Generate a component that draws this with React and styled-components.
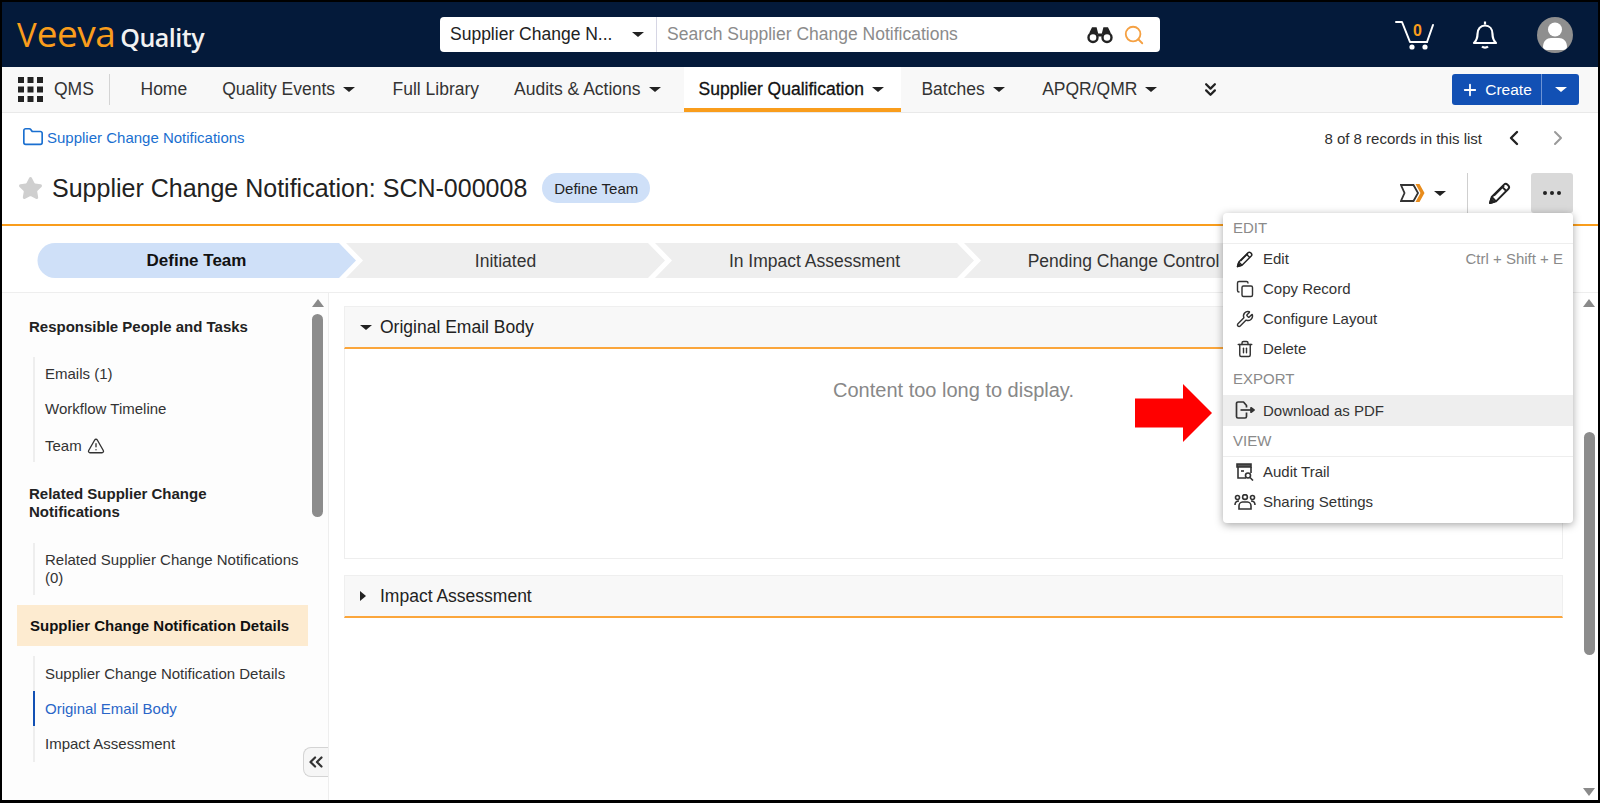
import React from "react";
import styled, { createGlobalStyle } from "styled-components";
import {
  ChevronLeft,
  ChevronRight,
  ChevronsDown,
  ChevronsLeft,
  Copy,
  Folder,
  Plus,
  Search,
  Star,
  Trash2,
  TriangleAlert,
  Wrench,
} from "lucide-react";

const GlobalStyle = createGlobalStyle`
  html, body {
    margin: 0;
    padding: 0;
    background: #000;
    overflow: hidden;
  }
  * {
    box-sizing: border-box;
  }
`;

const Frame = styled.div`
  position: relative;
  width: 1600px;
  height: 803px;
  border: solid #000;
  border-width: 2px 2px 3px 2px;
  background: #fff;
  display: flex;
  flex-direction: column;
  overflow: hidden;
  font-family: "Liberation Sans", Arial, sans-serif;
  color: #2a2a2a;
`;

const Header = styled.header`
  height: 65px;
  flex: none;
  background: #041a3a;
  display: grid;
  grid-template-columns: 438px 720px 1fr;
  align-items: center;
`;

const Logo = styled.div`
  display: flex;
  align-items: baseline;
  padding: 0 0 4px 15px;
`;

const LogoInitial = styled.span`
  font-family: "Open Sans", sans-serif;
  font-weight: 500;
  font-size: 33px;
  line-height: 1;
  color: #f99d1c;
`;

const LogoMark = styled.span`
  font-family: "Open Sans", sans-serif;
  font-weight: 500;
  font-size: 37px;
  letter-spacing: -0.5px;
  line-height: 1;
  color: #f99d1c;
`;

const LogoWord = styled.span`
  margin-left: 5px;
  font-family: "Open Sans", sans-serif;
  font-weight: 600;
  font-size: 25px;
  letter-spacing: -0.5px;
  line-height: 1;
  color: #f2f2f2;
`;

const SearchBar = styled.div`
  height: 35px;
  background: #fff;
  border-radius: 4px;
  display: flex;
  align-items: center;
`;

const SearchScope = styled.div`
  width: 217px;
  height: 100%;
  flex: none;
  display: flex;
  align-items: center;
  justify-content: space-between;
  padding: 0 12px 0 10px;
  border-right: 1px solid #d6d6e4;
  font-size: 17.5px;
  color: #222;
`;

const SearchHint = styled.div`
  flex: 1;
  padding-left: 10px;
  font-size: 17.5px;
  color: #8b8b8b;
`;

const SearchIcons = styled.div`
  display: flex;
  align-items: center;
  gap: 10px;
  padding-right: 15px;
`;

const UserTools = styled.div`
  display: flex;
  justify-content: flex-end;
  align-items: center;
  padding-right: 25px;
`;

const CartWrap = styled.div`
  position: relative;
  width: 40px;
  height: 30px;
  margin-right: 37px;
`;

const CartCount = styled.span`
  position: absolute;
  left: 18px;
  top: 2px;
  font-size: 16px;
  font-weight: 700;
  color: #f99d1c;
`;

const BellWrap = styled.div`
  display: flex;
  margin-right: 39px;
`;

const Avatar = styled.div`
  width: 36px;
  height: 36px;
  border-radius: 50%;
  background: #8f8f8f;
  overflow: hidden;
`;

const Nav = styled.nav`
  height: 46px;
  flex: none;
  background: #f8f8f8;
  border-bottom: 1px solid #e9e9e9;
  display: flex;
  align-items: stretch;
  padding-right: 19px;
  font-size: 17.5px;
  color: #333;
`;

const AppSwitch = styled.div`
  width: 108px;
  flex: none;
  margin: 7px 13px 7px 0;
  padding-left: 16px;
  display: flex;
  align-items: center;
  gap: 11px;
  border-right: 1px solid #d4d4d4;
`;

const NavItem = styled.div`
  display: flex;
  align-items: center;
  white-space: nowrap;
  padding: ${(p) => (p.$active ? "0 17px 0 15px" : p.$menu ? "0 20px 0 17.5px" : "0 17.5px")};
  margin: ${(p) => (p.$active ? "0 3px 0 3px" : "0")};
  background: ${(p) => (p.$active ? "#fff" : "transparent")};
  color: ${(p) => (p.$active ? "#111" : "#333")};
  -webkit-text-stroke: ${(p) => (p.$active ? "0.3px #111" : "0")};
  box-shadow: ${(p) => (p.$active ? "inset 0 -4px 0 #f99d1c" : "none")};
`;

const Caret = styled.span`
  display: inline-block;
  flex: none;
  width: 0;
  height: 0;
  margin-left: ${(p) => p.$gap ?? 8}px;
  border-left: 6px solid transparent;
  border-right: 6px solid transparent;
  border-top: 5.5px solid ${(p) => p.$color ?? "#222"};
`;

const NavMore = styled.div`
  display: flex;
  align-items: center;
  margin-left: 23px;
  color: #222;
`;

const CreateGroup = styled.div`
  margin: 7px 0 7px auto;
  height: 31px;
  display: flex;
  border-radius: 3px;
  overflow: hidden;
  background: #1250b4;
  color: #fff;
  font-size: 15.5px;
`;

const CreateMain = styled.div`
  width: 90px;
  display: flex;
  align-items: center;
  justify-content: center;
  gap: 6px;
  border-right: 1px solid #6d93d4;
`;

const CreateCaret = styled.div`
  width: 37px;
  display: flex;
  align-items: center;
  justify-content: center;
`;

const RecordBar = styled.div`
  flex: none;
  height: 48px;
  padding: 0 28px 0 20px;
  display: flex;
  align-items: center;
  justify-content: space-between;
`;

const Breadcrumb = styled.div`
  display: flex;
  align-items: center;
  gap: 3px;
  font-size: 15px;
  color: #1a6fd0;
`;

const Pager = styled.div`
  display: flex;
  align-items: center;
  font-size: 15px;
  color: #2f2f2f;
  gap: 20px;
  padding-top: 2px;
`;

const PagerArrows = styled.div`
  display: flex;
  gap: 20px;
`;

const TitleBar = styled.div`
  flex: none;
  height: 65px;
  padding: 0 25px 9px 16px;
  border-bottom: 2px solid #f99d1c;
  display: flex;
  align-items: center;
  justify-content: space-between;
`;

const TitleGroup = styled.div`
  display: flex;
  align-items: center;
`;

const Title = styled.h1`
  margin: 0 15px 0 9px;
  font-size: 25px;
  font-weight: 400;
  color: #222;
`;

const Badge = styled.span`
  height: 30px;
  padding: 0 12px;
  display: flex;
  align-items: center;
  border-radius: 15px;
  background: #cfe0f8;
  font-size: 15px;
  color: #222;
`;

const Actions = styled.div`
  display: flex;
  align-items: center;
  height: 40px;
  align-self: flex-end;
  margin-bottom: 2px;
`;

const WorkflowButton = styled.div`
  display: flex;
  align-items: center;
  padding-right: 21px;
  border-right: 1px solid #cfcfcf;
  height: 100%;
`;

const EditButton = styled.div`
  width: 63px;
  display: flex;
  justify-content: center;
`;

const MoreButton = styled.div`
  width: 42px;
  height: 40px;
  border-radius: 3px;
  background: #d9d9d9;
  display: flex;
  align-items: center;
  justify-content: center;
  gap: 3px;
`;

const Dot = styled.span`
  width: 4px;
  height: 4px;
  border-radius: 50%;
  background: #222;
`;

const StageStrip = styled.div`
  flex: none;
  height: 67px;
  padding: 17px 0 0 35px;
  border-bottom: 1px solid #eee;
  display: flex;
  overflow: hidden;
`;

const Stage = styled.div`
  width: 319px;
  height: 35px;
  flex: none;
  margin-left: ${(p) => (p.$first ? 0 : -10)}px;
  padding-top: 1px;
  display: flex;
  align-items: center;
  justify-content: center;
  font-size: ${(p) => (p.$current ? 17 : 17.5)}px;
  font-weight: ${(p) => (p.$current ? 700 : 400)};
  background: ${(p) => (p.$current ? "#cfe0f8" : "#eeeeee")};
  color: ${(p) => (p.$current ? "#111" : "#333")};
  clip-path: ${(p) =>
    p.$first
      ? "path('M18 0 H302 L319 17.5 L302 35 H18 A17.5 17.5 0 0 1 18 0 Z')"
      : "polygon(0 0, 302px 0, 100% 50%, 302px 100%, 0 100%, 17px 50%)"};
`;

const Body = styled.div`
  flex: 1;
  min-height: 0;
  display: flex;
`;

const Sidebar = styled.aside`
  position: relative;
  width: 327px;
  flex: none;
  display: flex;
  border-right: 1px solid #eee;
  background: #fdfdfd;
`;

const SideNav = styled.div`
  width: 306px;
  padding: 25px 0 0 15px;
  display: flex;
  flex-direction: column;
`;

const GroupTitle = styled.div`
  padding: 0 0 0 12px;
  margin-bottom: ${(p) => p.$mb ?? 21}px;
  font-size: 15px;
  line-height: 17.5px;
  font-weight: 700;
  color: #222;
`;

const ActiveGroup = styled.div`
  height: 41px;
  margin: 9.5px 0 10px;
  padding-left: 13px;
  display: flex;
  align-items: center;
  background: #fdebd0;
  font-size: 15px;
  font-weight: 700;
  color: #111;
`;

const SubList = styled.div`
  margin: 0 0 ${(p) => p.$mb ?? 23}px 16px;
  border-left: 2.5px solid #eeeeee;
  display: flex;
  flex-direction: column;
`;

const SubItem = styled.div`
  min-height: 35.3px;
  margin-left: -2.5px;
  padding: ${(p) => (p.$wrap ? "8px 8px 8px 10.5px" : "0 0 0 10.5px")};
  padding-top: ${(p) => (p.$lower ? "3px" : undefined)};
  display: flex;
  align-items: center;
  gap: 5px;
  font-size: 15px;
  line-height: 18px;
  border-left: 2.5px solid ${(p) => (p.$active ? "#1250b4" : "transparent")};
  color: ${(p) => (p.$active ? "#2a66c8" : "#333")};
`;

const ScrollTrack = styled.div`
  width: ${(p) => p.$w ?? 11}px;
  flex: none;
  margin: ${(p) => p.$margin ?? "0"};
  padding: 6px 0 0 ${(p) => p.$pl ?? 0}px;
  display: flex;
  flex-direction: column;
  align-items: center;
`;

const ScrollUp = styled.span`
  width: 0;
  height: 0;
  flex: none;
  border-left: 6px solid transparent;
  border-right: 6px solid transparent;
  border-bottom: 8px solid #8a8a8a;
`;

const ScrollDown = styled.span`
  width: 0;
  height: 0;
  flex: none;
  margin-top: auto;
  margin-bottom: 4px;
  border-left: 6px solid transparent;
  border-right: 6px solid transparent;
  border-top: 8px solid #8a8a8a;
`;

const ScrollThumb = styled.div`
  width: 11px;
  flex: none;
  height: ${(p) => p.$h}px;
  margin-top: ${(p) => p.$top}px;
  border-radius: 6px;
  background: #8c8c8c;
`;

const Collapse = styled.div`
  position: absolute;
  right: 0;
  top: 454px;
  width: 25px;
  height: 30px;
  border: 1px solid #d4d4d4;
  border-right: none;
  border-radius: 8px 0 0 8px;
  background: #f6f6f6;
  display: flex;
  align-items: center;
  justify-content: center;
`;

const Main = styled.main`
  flex: 1;
  min-width: 0;
  display: flex;
`;

const Sections = styled.div`
  flex: 1;
  min-width: 0;
  padding: 13px 0 0 15px;
  display: flex;
  flex-direction: column;
`;

const SectionHead = styled.div`
  height: 43px;
  padding-left: 15px;
  display: flex;
  align-items: center;
  background: #f8f8f8;
  border: 1px solid #efefef;
  border-bottom: 2px solid #fba63c;
  font-size: 17.5px;
  color: #222;
`;

const SectionBody = styled.div`
  height: 210px;
  margin-bottom: 16px;
  padding-top: 30px;
  border: 1px solid #eee;
  border-top: none;
  text-align: center;
  font-size: 20px;
  color: #888;
`;

const ClosedCaret = styled.span`
  width: 0;
  height: 0;
  flex: none;
  margin-right: 14px;
  border-top: 5.5px solid transparent;
  border-bottom: 5.5px solid transparent;
  border-left: 6px solid #222;
`;

const OpenCaret = styled(Caret)`
  margin-left: 0;
  margin-right: 8px;
`;

const Menu = styled.div`
  position: absolute;
  left: 1221px;
  top: 211px;
  width: 350px;
  height: 310px;
  background: #fff;
  border-radius: 4px;
  box-shadow: 0 2px 8px rgba(0, 0, 0, 0.35);
  z-index: 5;
  font-size: 15px;
  color: #333;
`;

const MenuLabel = styled.div`
  height: 31px;
  padding: 0 0 2px 10px;
  display: flex;
  align-items: center;
  border-bottom: ${(p) => (p.$rule ? "1px solid #eee" : "none")};
  color: #8a8a8a;
  font-size: 15px;
`;

const MenuItem = styled.div`
  height: ${(p) => (p.$hover ? 31 : 30)}px;
  padding: 0 10px 1px 13px;
  display: flex;
  align-items: center;
  gap: 9px;
  background: ${(p) => (p.$hover ? "#eeeeee" : "transparent")};
`;

const MenuIcon = styled.span`
  width: 18px;
  height: 18px;
  flex: none;
  display: flex;
  align-items: center;
  justify-content: center;
  & svg {
    flex: none;
  }
`;

const Shortcut = styled.span`
  margin-left: auto;
  color: #8a8a8a;
`;

const RedArrow = styled.svg`
  position: absolute;
  left: 1133px;
  top: 382px;
  z-index: 6;
`;

const GridIcon = () => (
  <svg width="25" height="25" viewBox="0 0 25 25" fill="#222">
    {[0, 9.5, 19].map((y) =>
      [0, 9.5, 19].map((x) => <rect key={`${x}-${y}`} x={x} y={y} width="6" height="6" />)
    )}
  </svg>
);

const BinocularsIcon = () => (
  <svg width="26" height="18" viewBox="0 0 26 18" fill="none" stroke="#222" strokeWidth="2.400">
    <circle cx="6" cy="11.500" r="4.500" />
    <circle cx="20" cy="11.500" r="4.500" />
    <path d="M10.500 9h5" strokeWidth="3" />
    <path d="M3 7l2.500-5h3.500l1.500 6M23 7l-2.500-5h-3.500l-1.500 6" fill="#222" strokeWidth="1.500" />
  </svg>
);

const CartIcon = () => (
  <svg width="40" height="30" viewBox="0 0 40 30" fill="none" stroke="#fff" strokeWidth="2" strokeLinecap="round" strokeLinejoin="round">
    <path d="M1 2h6l8 20h17" />
    <path d="M32 22l6-17" />
    <circle cx="17" cy="27" r="1.600" fill="#fff" />
    <circle cx="30" cy="27" r="1.600" fill="#fff" />
  </svg>
);

const BellIcon = () => (
  <svg width="26" height="30" viewBox="0 0 26 30" fill="none" stroke="#fff" strokeWidth="2.200" strokeLinejoin="round">
    <path d="M2 23c2-2 3.500-4 3.500-9 0-5 3-8.500 7.500-8.500S20.500 9 20.500 14c0 5 1.500 7 3.500 9z" />
    <path d="M13 1.500v3" />
    <path d="M10 26.500c1.500 1.500 4.500 1.500 6 0" />
  </svg>
);

const AvatarIcon = () => (
  <svg width="36" height="36" viewBox="0 0 36 36" fill="#fff">
    <circle cx="18" cy="12.500" r="7" />
    <path d="M6 30c0-6 4-9 8-9h8c4 0 8 3 8 9 0 2-2 3-4 3H10c-2 0-4-1-4-3z" />
  </svg>
);

const WorkflowIcon = () => (
  <svg width="26" height="20" viewBox="0 0 26 20" fill="none">
    <path d="M1 2h12.500l4.500 8-4.500 8H1l3.500-8z" stroke="#333" strokeWidth="1.800" />
    <path d="M15.500 1h4l5 9-5 9h-4l5-9z" fill="#e88c1c" />
  </svg>
);

const PencilIcon = ({ size }) => (
  <svg width={size} height={size} viewBox="0 0 24 24" fill="none" stroke="#222" strokeWidth="1.900" strokeLinejoin="round">
    <path d="M2 22l1.700-6L16 3.700a2.500 2.500 0 0 1 3.500 0l.8.8a2.500 2.500 0 0 1 0 3.500L8 20.300z" />
    <path d="M14 5.700l4.300 4.300M3.700 16l4.300 4.300M6 14.500L16 4.500" />
    <path d="M2 22l1.200-4 2.800 2.800z" fill="#222" />
  </svg>
);

const DownloadPdfIcon = () => (
  <svg width="20" height="18" viewBox="0 0 20 18" fill="none" stroke="#333" strokeWidth="1.700" strokeLinejoin="round">
    <path d="M11.500 11.500V15.500a1.500 1.500 0 0 1-1.500 1.500H3a1.500 1.500 0 0 1-1.500-1.500v-13A1.500 1.500 0 0 1 3 1h5.500l3 3.500v2" />
    <path d="M5.500 9h11" />
    <path d="M16 6.800L19 9l-3 2.200z" fill="#333" />
  </svg>
);

const AuditIcon = () => (
  <svg width="18" height="18" viewBox="0 0 18 18" fill="none" stroke="#333" strokeWidth="1.600">
    <path d="M1 1h14v3H1z" fill="#555" />
    <path d="M2 4v11h8M15 4v6" />
    <path d="M5 8h3" />
    <circle cx="12" cy="12.500" r="2.500" />
    <path d="M14 14.500L17 17.500" />
  </svg>
);

const SharingIcon = () => (
  <svg width="22" height="16" viewBox="0 0 22 16" fill="none" stroke="#333" strokeWidth="1.600">
    <circle cx="3.500" cy="3.500" r="2" />
    <circle cx="11" cy="3" r="2.400" />
    <circle cx="18.500" cy="3.500" r="2" />
    <path d="M1 11c0-3 1-4 4-4M21 11c0-3-1-4-4-4" />
    <path d="M5 15v-3c0-2 1.500-4 3.500-4h5c2 0 3.500 2 3.500 4v3z" />
  </svg>
);

const navItems = [
  { label: "Home" },
  { label: "Quality Events", menu: true },
  { label: "Full Library" },
  { label: "Audits & Actions", menu: true },
  { label: "Supplier Qualification", menu: true, active: true },
  { label: "Batches", menu: true },
  { label: "APQR/QMR", menu: true },
];

const stages = ["Define Team", "Initiated", "In Impact Assessment", "Pending Change Control"];

const App = () => {
  return (
    <>
      <GlobalStyle />
      <Frame>
        <Header>
          <Logo>
            <LogoInitial>V</LogoInitial>
            <LogoMark>eeva</LogoMark>
            <LogoWord>Quality</LogoWord>
          </Logo>
          <SearchBar>
            <SearchScope>
              Supplier Change N...
              <Caret />
            </SearchScope>
            <SearchHint>Search Supplier Change Notifications</SearchHint>
            <SearchIcons>
              <BinocularsIcon />
              <Search size={22} color="#f5a143" strokeWidth={2} />
            </SearchIcons>
          </SearchBar>
          <UserTools>
            <CartWrap>
              <CartIcon />
              <CartCount>0</CartCount>
            </CartWrap>
            <BellWrap>
              <BellIcon />
            </BellWrap>
            <Avatar>
              <AvatarIcon />
            </Avatar>
          </UserTools>
        </Header>

        <Nav>
          <AppSwitch>
            <GridIcon />
            QMS
          </AppSwitch>
          {navItems.map((item) => (
            <NavItem key={item.label} $active={item.active} $menu={item.menu}>
              {item.label}
              {item.menu && <Caret />}
            </NavItem>
          ))}
          <NavMore>
            <ChevronsDown size={21} strokeWidth={2.6} />
          </NavMore>
          <CreateGroup>
            <CreateMain>
              <Plus size={18} strokeWidth={2.4} />
              Create
            </CreateMain>
            <CreateCaret>
              <Caret $color="#fff" $gap={0} />
            </CreateCaret>
          </CreateGroup>
        </Nav>

        <RecordBar>
          <Breadcrumb>
            <Folder size={22} strokeWidth={1.8} />
            Supplier Change Notifications
          </Breadcrumb>
          <Pager>
            8 of 8 records in this list
            <PagerArrows>
              <ChevronLeft size={24} color="#222" strokeWidth={2.4} />
              <ChevronRight size={24} color="#9a9a9a" strokeWidth={2} />
            </PagerArrows>
          </Pager>
        </RecordBar>

        <TitleBar>
          <TitleGroup>
            <Star size={25} fill="#cfcfcf" color="#cfcfcf" />
            <Title>Supplier Change Notification: SCN-000008</Title>
            <Badge>Define Team</Badge>
          </TitleGroup>
          <Actions>
            <WorkflowButton>
              <WorkflowIcon />
              <Caret />
            </WorkflowButton>
            <EditButton>
              <PencilIcon size={24} />
            </EditButton>
            <MoreButton>
              <Dot />
              <Dot />
              <Dot />
            </MoreButton>
          </Actions>
        </TitleBar>

        <StageStrip>
          {stages.map((stage, i) => (
            <Stage key={stage} $first={i === 0} $current={i === 0}>
              {stage}
            </Stage>
          ))}
        </StageStrip>

        <Body>
          <Sidebar>
            <SideNav>
              <GroupTitle>Responsible People and Tasks</GroupTitle>
              <SubList>
                <SubItem>Emails (1)</SubItem>
                <SubItem>Workflow Timeline</SubItem>
                <SubItem $lower>
                  Team <TriangleAlert size={18} strokeWidth={1.8} color="#333" />
                </SubItem>
              </SubList>
              <GroupTitle $mb={23}>
                Related Supplier Change
                <br />
                Notifications
              </GroupTitle>
              <SubList $mb={0}>
                <SubItem $wrap>Related Supplier Change Notifications (0)</SubItem>
              </SubList>
              <ActiveGroup>Supplier Change Notification Details</ActiveGroup>
              <SubList $mb={0}>
                <SubItem>Supplier Change Notification Details</SubItem>
                <SubItem $active>Original Email Body</SubItem>
                <SubItem>Impact Assessment</SubItem>
              </SubList>
            </SideNav>
            <ScrollTrack $margin="0 0 0 4px">
              <ScrollUp />
              <ScrollThumb $h={203} $top={7} />
            </ScrollTrack>
            <Collapse>
              <ChevronsLeft size={22} color="#333" strokeWidth={2.4} />
            </Collapse>
          </Sidebar>

          <Main>
            <Sections>
              <SectionHead>
                <OpenCaret />
                Original Email Body
              </SectionHead>
              <SectionBody>Content too long to display.</SectionBody>
              <SectionHead>
                <ClosedCaret />
                Impact Assessment
              </SectionHead>
            </Sections>
            <ScrollTrack $w={35} $pl={17}>
              <ScrollUp />
              <ScrollThumb $h={223} $top={125} />
              <ScrollDown />
            </ScrollTrack>
          </Main>
        </Body>

        <Menu>
          <MenuLabel $rule>EDIT</MenuLabel>
          <MenuItem>
            <MenuIcon><PencilIcon size={18} /></MenuIcon>
            Edit
            <Shortcut>Ctrl + Shift + E</Shortcut>
          </MenuItem>
          <MenuItem>
            <MenuIcon><Copy size={18} strokeWidth={1.9} /></MenuIcon>
            Copy Record
          </MenuItem>
          <MenuItem>
            <MenuIcon><Wrench size={18} strokeWidth={1.9} /></MenuIcon>
            Configure Layout
          </MenuItem>
          <MenuItem>
            <MenuIcon><Trash2 size={18} strokeWidth={1.9} /></MenuIcon>
            Delete
          </MenuItem>
          <MenuLabel>EXPORT</MenuLabel>
          <MenuItem $hover>
            <MenuIcon><DownloadPdfIcon /></MenuIcon>
            Download as PDF
          </MenuItem>
          <MenuLabel $rule>VIEW</MenuLabel>
          <MenuItem>
            <MenuIcon><AuditIcon /></MenuIcon>
            Audit Trail
          </MenuItem>
          <MenuItem>
            <MenuIcon><SharingIcon /></MenuIcon>
            Sharing Settings
          </MenuItem>
        </Menu>

        <RedArrow width="78" height="58" viewBox="0 0 78 58">
          <path d="M0 14.500h48V0l29 29-29 29V43.500H0z" fill="#ff0000" />
        </RedArrow>
      </Frame>
    </>
  );
};

export default App;
